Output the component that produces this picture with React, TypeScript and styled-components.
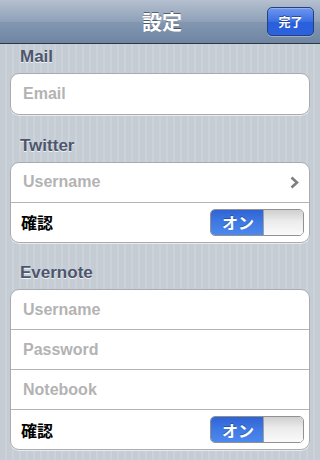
import React, { useState } from 'react'
import styled, { createGlobalStyle } from 'styled-components'

const GlobalStyle = createGlobalStyle`
    html, body {
        margin: 0;
        padding: 0;
    }

    body {
        width: 320px;
        height: 460px;
        overflow: hidden;
        font-family: 'Liberation Sans', 'Noto Sans CJK JP', sans-serif;
        background-color: #c5ccd4;
        background-image: repeating-linear-gradient(
            90deg,
            #c5ccd4 0,
            #c5ccd4 5px,
            #cbd2d9 5px,
            #cbd2d9 7px
        );
    }
`

const Screen = styled.div`
    width: 320px;
    height: 460px;
    display: flex;
    flex-direction: column;
`

const NavBar = styled.header`
    height: 43px;
    flex-shrink: 0;
    display: grid;
    grid-template-columns: 1fr auto 1fr;
    align-items: center;
    padding: 0 6px 0 10px;
    border-bottom: 1px solid #2d3642;
    background: linear-gradient(
        #b5c0cf 0%,
        #8fa1b9 50%,
        #8397b1 51%,
        #6e85a3 100%
    );
`

const NavTitle = styled.h1`
    grid-column: 2;
    margin: 0;
    font-size: 20px;
    font-weight: bold;
    color: #fff;
    text-shadow: 0 -1px 0 rgba(0, 0, 0, 0.45);
`

const DoneButton = styled.button`
    grid-column: 3;
    justify-self: end;
    width: 47px;
    height: 29px;
    margin-top: -1px;
    padding: 0;
    border: 1px solid #25407c;
    border-radius: 5px;
    font-family: inherit;
    font-size: 12px;
    font-weight: bold;
    color: #fff;
    text-shadow: 0 -1px 0 rgba(0, 0, 0, 0.4);
    background: linear-gradient(#6d97ef 0%, #3b6ee3 50%, #2a5fdc 51%, #2b62dd 100%);
    box-shadow: 0 1px 0 rgba(255, 255, 255, 0.3),
        inset 0 1px 0 rgba(255, 255, 255, 0.25);
`

const Content = styled.main`
    display: flex;
    flex-direction: column;
    gap: 17.5px;
    padding: 0 10px;
`

const Section = styled.section`
    display: flex;
    flex-direction: column;
`

const SectionTitle = styled.h2`
    margin: 0;
    padding: 2px 10px 6px;
    font-size: 17px;
    line-height: 21px;
    font-weight: bold;
    color: #4c566c;
    text-shadow: 0 1px 0 rgba(255, 255, 255, 0.8);
`

const Group = styled.div`
    background: #fff;
    border: 1px solid #a9abae;
    border-radius: 9px;
    overflow: hidden;
    box-shadow: 0 1px 0 rgba(255, 255, 255, 0.6);
`

const Row = styled.div<{ $tall?: boolean }>`
    height: ${p => (p.$tall ? 40 : 39)}px;
    display: flex;
    align-items: center;
    padding: 0 5px 0 12px;

    & + & {
        border-top: 1px solid #b3b3b3;
    }
`

const Field = styled.input`
    flex: 1;
    min-width: 0;
    border: 0;
    outline: none;
    background: transparent;
    padding: 0;
    font-family: inherit;
    font-size: 16px;
    font-weight: bold;
    color: #000;

    &::placeholder {
        color: #b3b3b3;
        opacity: 1;
    }
`

const Label = styled.span`
    flex: 1;
    margin-left: -2px;
    font-size: 16px;
    font-weight: bold;
    color: #000;
`

const Chevron = styled.svg`
    width: 9px;
    height: 13px;
    margin-right: 5px;
    flex-shrink: 0;
`

const Switch = styled.button<{ $on: boolean }>`
    width: 94px;
    height: 27px;
    padding: 0;
    display: flex;
    border: 1px solid #919191;
    border-radius: 5px;
    overflow: hidden;
    cursor: pointer;
    background: #fff;
    flex-direction: ${p => (p.$on ? 'row' : 'row-reverse')};
`

const SwitchLabel = styled.span<{ $on: boolean }>`
    flex: 1;
    display: flex;
    align-items: center;
    justify-content: center;
    padding-left: 2px;
    font-family: 'Liberation Sans', 'Noto Sans CJK JP', sans-serif;
    font-size: 16px;
    font-weight: bold;
    color: ${p => (p.$on ? '#fff' : '#7a7a7a')};
    text-shadow: ${p => (p.$on ? '0 -1px 0 rgba(0,0,0,0.3)' : 'none')};
    background: ${p =>
        p.$on
            ? 'linear-gradient(#2f63d4 0%, #3f7ae4 50%, #4d88ed 100%)'
            : 'linear-gradient(#e9e9e9, #fdfdfd)'};
`

const Knob = styled.span`
    width: 39px;
    flex-shrink: 0;
    border-left: 1px solid #a0a0a0;
    background: linear-gradient(#cfcfcf 0%, #ececec 45%, #fafafa 100%);
`

function Toggle({ initial = true }: { initial?: boolean }) {
    const [on, setOn] = useState(initial)

    return (
        <Switch $on={on} onClick={() => setOn(!on)}>
            <SwitchLabel $on={on}>{on ? 'オン' : 'オフ'}</SwitchLabel>
            <Knob />
        </Switch>
    )
}

export default function App() {
    return (
        <Screen>
            <GlobalStyle />
            <NavBar>
                <NavTitle>設定</NavTitle>
                <DoneButton>完了</DoneButton>
            </NavBar>

            <Content>
                <Section>
                    <SectionTitle>Mail</SectionTitle>
                    <Group>
                        <Row $tall>
                            <Field placeholder="Email" />
                        </Row>
                    </Group>
                </Section>

                <Section>
                    <SectionTitle>Twitter</SectionTitle>
                    <Group>
                        <Row>
                            <Field placeholder="Username" />
                            <Chevron viewBox="0 0 9 13">
                                <path
                                    d="M1.5 1.5 L7 6.5 L1.5 11.5"
                                    fill="none"
                                    stroke="#7f7f7f"
                                    strokeWidth="2.6"
                                />
                            </Chevron>
                        </Row>
                        <Row>
                            <Label>確認</Label>
                            <Toggle />
                        </Row>
                    </Group>
                </Section>

                <Section>
                    <SectionTitle>Evernote</SectionTitle>
                    <Group>
                        <Row>
                            <Field placeholder="Username" />
                        </Row>
                        <Row>
                            <Field placeholder="Password" type="password" />
                        </Row>
                        <Row>
                            <Field placeholder="Notebook" />
                        </Row>
                        <Row>
                            <Label>確認</Label>
                            <Toggle />
                        </Row>
                    </Group>
                </Section>
            </Content>
        </Screen>
    )
}
